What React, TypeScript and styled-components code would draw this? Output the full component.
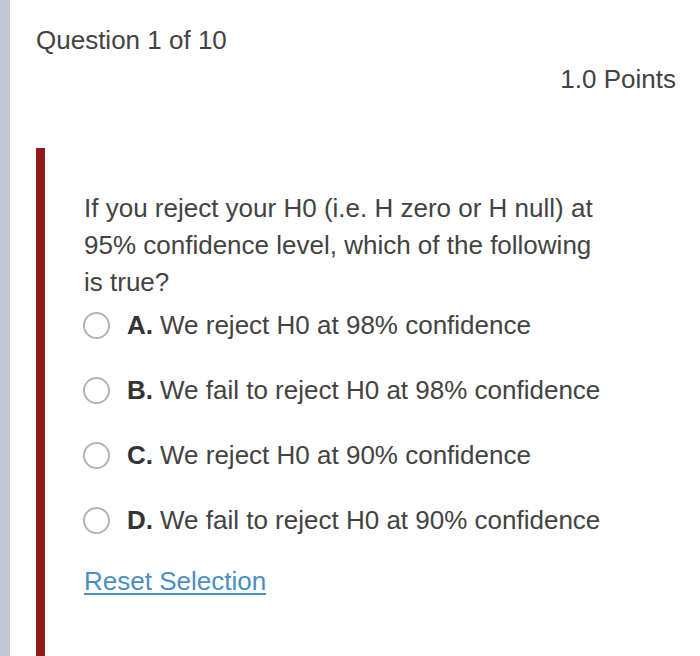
import React from 'react';
import styled, { createGlobalStyle } from 'styled-components';

const GlobalStyle = createGlobalStyle`
  html, body {
    margin: 0;
    padding: 0;
    background: #ffffff;
  }
  #root {
    min-height: 100vh;
  }
`;

const Page = styled.div`
  display: flex;
  height: 100vh;
  overflow: hidden;
  font-family: 'Liberation Sans', Arial, sans-serif;
  color: #434343;
`;

const SideStrip = styled.div`
  width: 10px;
  flex-shrink: 0;
  background-color: #c4c8d6;
`;

const Main = styled.div`
  flex: 1;
  display: flex;
  flex-direction: column;
  padding: 25px 24px 0 26px;
`;

const Heading = styled.div`
  font-size: 26px;
  line-height: 30px;
`;

const Points = styled.div`
  font-size: 26px;
  line-height: 30px;
  text-align: right;
  margin-top: 9px;
`;

const QuestionBlock = styled.div`
  flex: 1;
  margin-top: 54px;
  border-left: 9px solid #8e1a17;
  padding: 42px 0 0 39px;
`;

const Prompt = styled.div`
  font-size: 26px;
  line-height: 37px;
  max-width: 530px;
`;

const Options = styled.div`
  display: flex;
  flex-direction: column;
  gap: 28px;
  margin-top: 6px;
`;

const Option = styled.label`
  display: flex;
  align-items: center;
  font-size: 26px;
  line-height: 37px;
  cursor: pointer;
`;

const Radio = styled.span`
  width: 27px;
  height: 27px;
  box-sizing: border-box;
  border: 2px solid #b3b3b3;
  border-radius: 50%;
  margin-left: -1px;
  margin-right: 17px;
  flex-shrink: 0;
`;

const Letter = styled.b`
  color: #333333;
  margin-right: 7px;
`;

const ResetLink = styled.a`
  display: inline-block;
  margin-top: 24px;
  font-size: 26px;
  line-height: 37px;
  color: #4a8fc4;
  text-decoration: underline;
  text-underline-offset: 3px;
  cursor: pointer;
`;

const options = [
  { letter: 'A.', text: 'We reject H0 at 98% confidence' },
  { letter: 'B.', text: 'We fail to reject H0 at 98% confidence' },
  { letter: 'C.', text: 'We reject H0 at 90% confidence' },
  { letter: 'D.', text: 'We fail to reject H0 at 90% confidence' },
];

const App: React.FC = () => {
  return (
    <>
      <GlobalStyle />
      <Page>
        <SideStrip />
        <Main>
          <Heading>Question 1 of 10</Heading>
          <Points>1.0 Points</Points>
          <QuestionBlock>
            <Prompt>
              If you reject your H0 (i.e. H zero or H null) at 95% confidence level, which of the following is true?
            </Prompt>
            <Options>
              {options.map((o) => (
                <Option key={o.letter}>
                  <Radio />
                  <span>
                    <Letter>{o.letter}</Letter>
                    {o.text}
                  </span>
                </Option>
              ))}
            </Options>
            <ResetLink>Reset Selection</ResetLink>
          </QuestionBlock>
        </Main>
      </Page>
    </>
  );
};

export default App;
